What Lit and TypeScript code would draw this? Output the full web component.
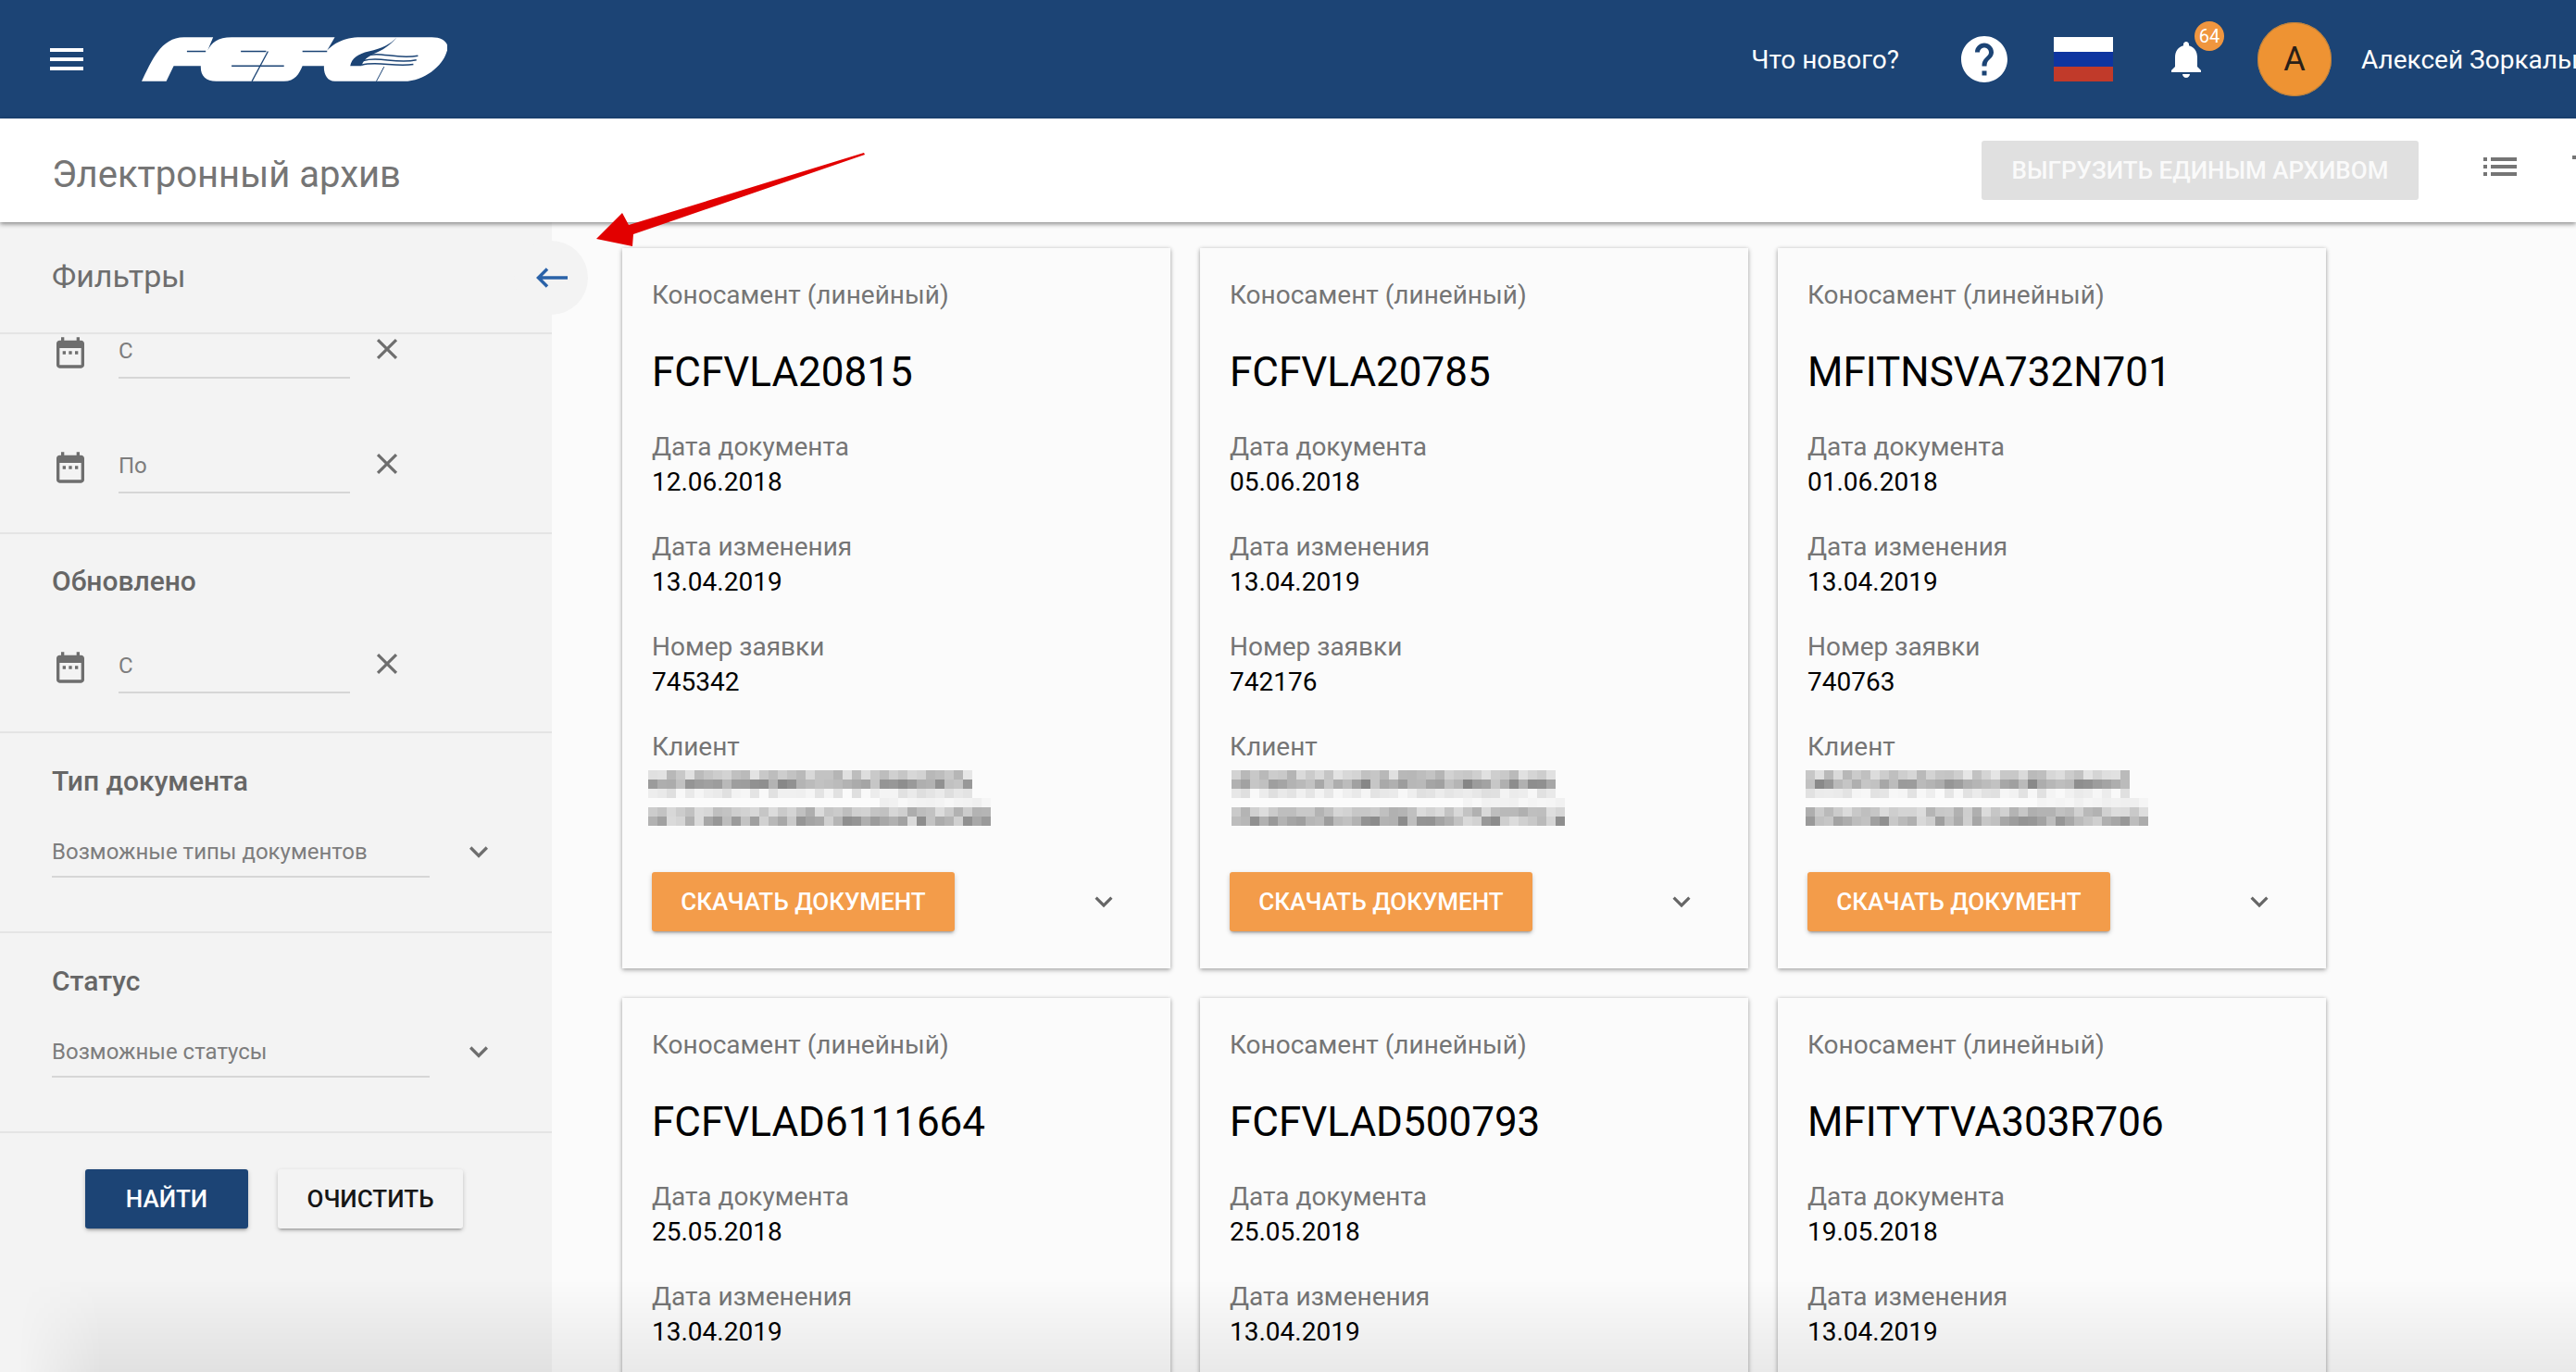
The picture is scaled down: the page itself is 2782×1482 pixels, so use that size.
import { LitElement, html, css, svg, nothing } from "lit";
import { customElement } from "lit/decorators.js";

const ICONS: Record<string, string> = {
  menu: "M3 18h18v-2H3v2zm0-5h18v-2H3v2zm0-7v2h18V6H3z",
  help: "M12 2C6.48 2 2 6.48 2 12s4.48 10 10 10 10-4.48 10-10S17.52 2 12 2zm1 17h-2v-2h2v2zm2.07-7.75l-.9.92C13.45 12.9 13 13.5 13 15h-2v-.5c0-1.1.45-2.1 1.17-2.83l1.24-1.26c.37-.36.59-.86.59-1.41 0-1.1-.9-2-2-2s-2 .9-2 2H8c0-2.21 1.79-4 4-4s4 1.79 4 4c0 .88-.36 1.68-.93 2.25z",
  bell: "M12 22c1.1 0 2-.9 2-2h-4c0 1.1.89 2 2 2zm6-6v-5c0-3.07-1.64-5.64-4.5-6.32V4c0-.83-.67-1.5-1.5-1.5s-1.5.67-1.5 1.5v.68C7.63 5.36 6 7.92 6 11v5l-2 2v1h16v-1l-2-2z",
  list: "M3 13h2v-2H3v2zm0 4h2v-2H3v2zm0-8h2V7H3v2zm4 4h14v-2H7v2zm0 4h14v-2H7v2zM7 7v2h14V7H7z",
  edge: "M3 6v2h18V6H3z",
  date: "M9 11H7v2h2v-2zm4 0h-2v2h2v-2zm4 0h-2v2h2v-2zm2-7h-1V2h-2v2H8V2H6v2H5c-1.11 0-1.99.9-1.99 2L3 20c0 1.1.89 2 2 2h14c1.1 0 2-.9 2-2V6c0-1.1-.9-2-2-2zm0 16H5V9h14v11z",
  close: "M19 6.41L17.59 5 12 10.59 6.41 5 5 6.41 10.59 12 5 17.59 6.41 19 12 13.41 17.59 19 19 17.59 13.41 12z",
  more: "M16.59 8.59L12 13.17 7.41 8.59 6 10l6 6 6-6z",
};

const icon = (name: string, size: number) =>
  html`<svg class="icon" width=${size} height=${size} viewBox="0 0 24 24" fill="currentColor"><path d=${ICONS[name]}></path></svg>`;

const logo = html`<svg class="logo" width="331" height="48" viewBox="5 12 995 143">
  <path
    fill="#fff"
    d="M8 155C40 90 70 12 145 12L240 12L222 55C235 30 255 12 300 12L635 12L610 55C630 35 660 12 720 12L950 12C990 12 1010 35 998 60C985 105 925 155 860 155L635 155C610 155 598 130 600 105L530 105C520 130 505 155 470 155L250 155C215 155 198 135 200 105L112 105L88 155Z"
  ></path>
  <g fill="none" stroke="#1c4475">
    <path d="M155 58H216M330 58H412M530 58H610M300 105H470" stroke-width="4.5"></path>
    <path d="M418 58L366 155" stroke-width="4"></path>
    <path d="M770 155L795 108" stroke-width="3"></path>
    <path d="M732 74C780 55 830 85 905 72M728 88C780 72 830 100 900 86M722 102C775 88 830 110 890 100" stroke-width="4.5"></path>
  </g>
  <path d="M836 13C815 35 790 48 745 58C710 66 690 80 685 105L722 105C726 90 735 80 760 66C790 55 815 38 836 13Z" fill="#1c4475"></path>
</svg>`;

// pixelated client name: one row of gray cells per value, seeded per card
const blurRows = (seed: number, w1: number, w2: number) => {
  let s = seed;
  const next = () => {
    s = (s * 9301 + 49297) % 233280;
    return s / 233280;
  };
  const rows = [
    { base: 205, spread: 50, w: w1, from: 0 },
    { base: 165, spread: 70, w: w1, from: 0 },
    { base: 236, spread: 28, w: w1, from: 0 },
    { base: 243, spread: 10, w: w2, from: 25 },
    { base: 198, spread: 50, w: w2, from: 0 },
    { base: 180, spread: 80, w: w2, from: 0 },
  ];
  return rows.map((r) =>
    Array.from({ length: r.w }, (_, i) => {
      const g = Math.round(r.base + (next() - 0.5) * r.spread);
      return i < r.from ? 251 : g;
    })
  );
};

const cards = [
  { no: "FCFVLA20815", doc: "12.06.2018", req: "745342", seed: 17, w1: 35, w2: 37, dx: -4 },
  { no: "FCFVLA20785", doc: "05.06.2018", req: "742176", seed: 211, w1: 35, w2: 36, dx: 2 },
  { no: "MFITNSVA732N701", doc: "01.06.2018", req: "740763", seed: 907, w1: 35, w2: 37, dx: -2 },
  { no: "FCFVLAD6111664", doc: "25.05.2018", req: "", seed: 1, w1: 0, w2: 0, dx: 0 },
  { no: "FCFVLAD500793", doc: "25.05.2018", req: "", seed: 2, w1: 0, w2: 0, dx: 0 },
  { no: "MFITYTVA303R706", doc: "19.05.2018", req: "", seed: 3, w1: 0, w2: 0, dx: 0 },
];

@customElement("app-root")
export class AppRoot extends LitElement {
  static styles = css`
    :host {
      display: block;
      position: relative;
      width: 2782px;
      height: 1482px;
      overflow: hidden;
      background: #fbfbfb;
      font-family: Roboto, "Liberation Sans", sans-serif;
      font-size: 28px;
      color: #757575;
    }
    .icon {
      display: block;
      flex: none;
    }

    .topbar {
      display: flex;
      align-items: center;
      height: 128px;
      padding-left: 48px;
      background: #1c4475;
      color: #fff;
      white-space: nowrap;
    }
    .logo {
      flex: none;
      margin-left: 56px;
      margin-right: auto;
    }
    .whatsnew {
      margin-right: 62px;
    }
    .help {
      margin-right: 45px;
    }
    .flag {
      flex: none;
      width: 64px;
      height: 48px;
      margin-right: 55px;
      background: linear-gradient(#fff 0 33.3%, #0e35a0 33.3% 66.6%, #c13a2a 66.6%);
    }
    .bell {
      position: relative;
      margin-right: 53px;
    }
    .badge {
      position: absolute;
      top: -17px;
      left: 33px;
      width: 32px;
      height: 32px;
      border-radius: 50%;
      background: #f0963f;
      font-size: 20px;
      line-height: 32px;
      text-align: center;
    }
    .avatar {
      flex: none;
      width: 80px;
      height: 80px;
      margin-right: 32px;
      border-radius: 50%;
      background: #ee9333;
      box-shadow: inset 0 0 0 1px #b8803f;
      color: #2a2018;
      font-size: 36px;
      line-height: 80px;
      text-align: center;
    }
    .username {
      flex: none;
      width: 232px;
      overflow: hidden;
    }

    .subbar {
      position: relative;
      z-index: 2;
      display: flex;
      align-items: center;
      height: 112px;
      padding-left: 56px;
      background: #fff;
      box-shadow: 0 2px 5px rgba(0, 0, 0, 0.45);
      white-space: nowrap;
    }
    .page-title {
      margin-top: 8px;
      margin-right: auto;
      font-size: 40px;
      color: #757575;
    }
    .export {
      flex: none;
      width: 472px;
      height: 64px;
      margin-right: 64px;
      border-radius: 3px;
      background: #e0e0e0;
      color: #fafafa;
      font-size: 26px;
      font-weight: 500;
      line-height: 64px;
      text-align: center;
    }
    .list-btn {
      flex: none;
      margin-top: -8px;
      margin-right: 48px;
      color: #757575;
    }
    .sort-btn {
      flex: none;
      margin-top: -8px;
      margin-right: -38px;
      color: #757575;
    }

    .body {
      display: flex;
      height: 1242px;
    }
    .filters {
      flex: none;
      position: relative;
      width: 596px;
      background: #f3f3f3;
      color: #6e6e6e;
    }
    .filters-head {
      box-sizing: border-box;
      display: flex;
      align-items: center;
      height: 121px;
      padding: 0 0 4px 56px;
      border-bottom: 2px solid #e4e4e4;
      font-size: 34px;
    }
    .collapse {
      position: absolute;
      top: 20px;
      left: 555px;
      display: flex;
      align-items: center;
      justify-content: center;
      width: 80px;
      height: 80px;
      border-radius: 50%;
      background: #f3f3f3;
    }
    .collapse svg {
      margin-left: 2px;
    }
    .section {
      border-bottom: 2px solid #e4e4e4;
    }
    .section-dates {
      padding: 0 0 42px;
    }
    .section-dates.titled {
      padding: 31px 0 41px;
    }
    .section-select {
      padding: 32px 0 58px;
    }
    .section-title {
      padding-left: 56px;
      font-size: 30px;
      font-weight: 500;
      line-height: 40px;
      color: #666;
    }
    .date-row {
      display: flex;
      align-items: center;
      padding-left: 56px;
    }
    .date-row + .date-row {
      margin-top: 76px;
    }
    .titled .date-row {
      margin-top: 53px;
    }
    .date-row .icon:first-child {
      margin-top: -8px;
    }
    .date-field {
      box-sizing: border-box;
      width: 250px;
      height: 48px;
      margin: 0 21px 0 32px;
      border-bottom: 2px solid #d6d6d6;
      font-size: 24px;
      line-height: 36px;
      color: #7d7d7d;
    }
    .clear {
      margin-top: -8px;
    }
    .select-row {
      display: flex;
      align-items: center;
      padding-left: 56px;
      margin-top: 36px;
    }
    .select-field {
      box-sizing: border-box;
      width: 408px;
      height: 48px;
      margin-right: 33px;
      border-bottom: 2px solid #d6d6d6;
      font-size: 24px;
      line-height: 40px;
      color: #7d7d7d;
    }
    .select-row .icon {
      margin-top: -8px;
    }
    .actions {
      display: flex;
      gap: 32px;
      padding: 39px 0 0 92px;
    }
    .btn {
      height: 64px;
      border-radius: 3px;
      font-size: 26px;
      font-weight: 500;
      line-height: 64px;
      text-align: center;
      box-shadow: 0 3px 3px -2px rgba(0, 0, 0, 0.3), 0 2px 5px rgba(0, 0, 0, 0.2);
    }
    .btn-find {
      width: 176px;
      background: #1c4475;
      color: #fff;
    }
    .btn-clear {
      width: 200px;
      background: #f3f3f3;
      color: #161616;
    }

    .cards {
      display: grid;
      grid-template-columns: repeat(3, 592px);
      column-gap: 32px;
      row-gap: 32px;
      align-content: start;
      padding: 28px 0 0 76px;
    }
    .card {
      box-sizing: border-box;
      height: 778px;
      padding: 31px 32px 0;
      background: #fbfbfb;
      box-shadow: 0 2px 5px rgba(0, 0, 0, 0.3), 0 0 4px rgba(0, 0, 0, 0.12);
    }
    .card-type {
      line-height: 40px;
    }
    .card-no {
      margin: 35px 0 34px;
      font-size: 44px;
      line-height: 56px;
      color: #000;
    }
    .field {
      margin-bottom: 34px;
    }
    .field-label {
      line-height: 37px;
    }
    .field-value {
      line-height: 39px;
      margin-bottom: -2px;
      color: #000;
    }
    .client {
      display: block;
      margin: -27px 0 50px;
    }
    .card-foot {
      display: flex;
      align-items: center;
    }
    .download {
      width: 327px;
      height: 64px;
      border-radius: 3px;
      background: #f39c4a;
      color: #fff;
      font-size: 26px;
      font-weight: 500;
      line-height: 64px;
      text-align: center;
      box-shadow: 0 3px 3px -2px rgba(0, 0, 0, 0.3), 0 2px 5px rgba(0, 0, 0, 0.2);
    }
    .card-foot .icon {
      margin-left: 142px;
      color: #666;
    }

    .page-fade {
      position: absolute;
      z-index: 3;
      left: 0;
      right: 0;
      bottom: 0;
      height: 100px;
      background: linear-gradient(rgba(0, 0, 0, 0), rgba(0, 0, 0, 0.07));
      -webkit-mask-image: linear-gradient(90deg, transparent 20px, #000 110px);
      mask-image: linear-gradient(90deg, transparent 20px, #000 110px);
      pointer-events: none;
    }
    .pointer {
      position: absolute;
      z-index: 3;
      top: 160px;
      left: 640px;
    }
  `;

  private dateRow(label: string) {
    return html`<div class="date-row">
      ${icon("date", 40)}
      <div class="date-field">${label}</div>
      <span class="clear">${icon("close", 38)}</span>
    </div>`;
  }

  private selectSection(title: string, hint: string) {
    return html`<div class="section section-select">
      <div class="section-title">${title}</div>
      <div class="select-row">
        <div class="select-field">${hint}</div>
        ${icon("more", 40)}
      </div>
    </div>`;
  }

  private renderLowerCard(c: (typeof cards)[number]) {
    const rows = blurRows(c.seed, c.w1, c.w2);
    return html`
      <div class="field">
        <div class="field-label">Номер заявки</div>
        <div class="field-value">${c.req}</div>
      </div>
      <div class="field">
        <div class="field-label">Клиент</div>
      </div>
      <svg class="client" style="margin-left:${c.dx}px" width="372" height="60" shape-rendering="crispEdges">
        ${rows.map((row, y) =>
          row.map(
            (g, x) => svg`<rect x=${x * 10} y=${y * 10} width="10" height="10" fill="rgb(${g},${g},${g})"></rect>`
          )
        )}
      </svg>
      <div class="card-foot">
        <div class="download">СКАЧАТЬ ДОКУМЕНТ</div>
        ${icon("more", 38)}
      </div>
    `;
  }

  private renderCard(c: (typeof cards)[number]) {
    return html`<div class="card">
      <div class="card-type">Коносамент (линейный)</div>
      <div class="card-no">${c.no}</div>
      <div class="field">
        <div class="field-label">Дата документа</div>
        <div class="field-value">${c.doc}</div>
      </div>
      <div class="field">
        <div class="field-label">Дата изменения</div>
        <div class="field-value">13.04.2019</div>
      </div>
      ${c.req ? this.renderLowerCard(c) : nothing}
    </div>`;
  }

  render() {
    return html`
      <div class="topbar">
        ${icon("menu", 48)} ${logo}
        <span class="whatsnew">Что нового?</span>
        <span class="help">${icon("help", 60)}</span>
        <div class="flag"></div>
        <div class="bell">${icon("bell", 48)}<div class="badge">64</div></div>
        <div class="avatar">А</div>
        <span class="username">Алексей Зоркальцев</span>
      </div>
      <div class="subbar">
        <div class="page-title">Электронный архив</div>
        <div class="export">ВЫГРУЗИТЬ ЕДИНЫМ АРХИВОМ</div>
        <span class="list-btn">${icon("list", 48)}</span>
        <span class="sort-btn">${icon("edge", 48)}</span>
      </div>
      <div class="body">
        <aside class="filters">
          <div class="filters-head">Фильтры</div>
          <div class="collapse">
            <svg width="34" height="22" viewBox="0 0 34 22" fill="none" stroke="#2a62a8" stroke-width="3.5">
              <path d="M34 11H3M12 1.5L2.5 11L12 20.5"></path>
            </svg>
          </div>
          <div class="section section-dates">${this.dateRow("С")} ${this.dateRow("По")}</div>
          <div class="section section-dates titled">
            <div class="section-title">Обновлено</div>
            ${this.dateRow("С")}
          </div>
          ${this.selectSection("Тип документа", "Возможные типы документов")}
          ${this.selectSection("Статус", "Возможные статусы")}
          <div class="actions">
            <div class="btn btn-find">НАЙТИ</div>
            <div class="btn btn-clear">ОЧИСТИТЬ</div>
          </div>
        </aside>
        <main class="cards">${cards.map((c) => this.renderCard(c))}</main>
      </div>
      <div class="page-fade"></div>
      <svg class="pointer" width="300" height="110" viewBox="640 160 300 110">
        <path d="M644 258L672 230L679 243L933 165L934 167L684 253L683 266Z" fill="#e20000"></path>
      </svg>
    `;
  }
}
